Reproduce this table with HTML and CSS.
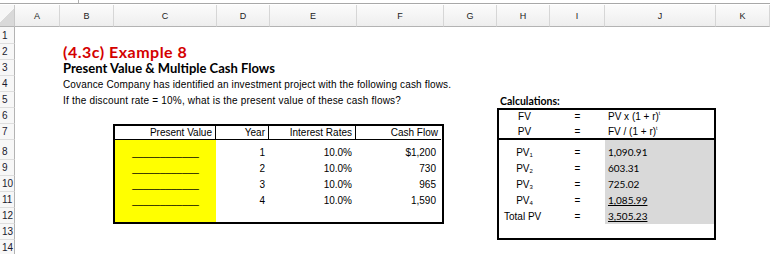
FILE: index.html
```html
<!DOCTYPE html>
<html>
<head>
<meta charset="utf-8">
<link rel="stylesheet" href="styles.css">
</head>
<body>
<div class="topbar"><span class="topdiv"></span></div>
<div class="sheet">
  <div class="corner"></div>
  <div class="colhead">A</div>
  <div class="colhead">B</div>
  <div class="colhead">C</div>
  <div class="colhead">D</div>
  <div class="colhead">E</div>
  <div class="colhead">F</div>
  <div class="colhead">G</div>
  <div class="colhead">H</div>
  <div class="colhead">I</div>
  <div class="colhead">J</div>
  <div class="colhead">K</div>

  <div class="rowhead r1">1</div>
  <div class="rowhead r2">2</div>
  <div class="rowhead r3">3</div>
  <div class="rowhead r4">4</div>
  <div class="rowhead r5">5</div>
  <div class="rowhead r6">6</div>
  <div class="rowhead r7">7</div>
  <div class="rowhead r8">8</div>
  <div class="rowhead r9">9</div>
  <div class="rowhead r10">10</div>
  <div class="rowhead r11">11</div>
  <div class="rowhead r12">12</div>
  <div class="rowhead r13">13</div>
  <div class="rowhead r14">14</div>

  <div class="title">(4.3c) Example 8</div>
  <div class="subtitle">Present Value &amp; Multiple Cash Flows</div>
  <div class="line4">Covance Company has identified an investment project with the following cash flows.</div>
  <div class="line5">If the discount rate = 10%, what is the present value of these cash flows?</div>
  <div class="calc-label">Calculations:</div>

  <div class="cf-table">
    <div class="th th-div">Present Value</div>
    <div class="th th-div">Year</div>
    <div class="th th-div">Interest Rates</div>
    <div class="th">Cash Flow</div>

    <div class="td yellow blank">____________</div>
    <div class="td num">1</div>
    <div class="td num">10.0%</div>
    <div class="td num cash">$1,200</div>

    <div class="td yellow blank">____________</div>
    <div class="td num">2</div>
    <div class="td num">10.0%</div>
    <div class="td num cash">730</div>

    <div class="td yellow blank">____________</div>
    <div class="td num">3</div>
    <div class="td num">10.0%</div>
    <div class="td num cash">965</div>

    <div class="td yellow blank">____________</div>
    <div class="td num">4</div>
    <div class="td num">10.0%</div>
    <div class="td num cash">1,590</div>

    <div class="td yellow"></div>
    <div class="td"></div>
    <div class="td"></div>
    <div class="td"></div>
  </div>

  <div class="calc-box">
    <div class="cc ctr">FV</div>
    <div class="cc ctr">=</div>
    <div class="cc left"><span>PV x (1 + r)<sup>t</sup></span></div>

    <div class="cc ctr sep">PV</div>
    <div class="cc ctr sep">=</div>
    <div class="cc left sep"><span>FV / (1 + r)<sup>t</sup></span></div>

    <div class="cc ctr"><span>PV<sub>1</sub></span></div>
    <div class="cc ctr">=</div>
    <div class="cc val">1,090.91</div>

    <div class="cc ctr"><span>PV<sub>2</sub></span></div>
    <div class="cc ctr">=</div>
    <div class="cc val">603.31</div>

    <div class="cc ctr"><span>PV<sub>3</sub></span></div>
    <div class="cc ctr">=</div>
    <div class="cc val">725.02</div>

    <div class="cc ctr"><span>PV<sub>4</sub></span></div>
    <div class="cc ctr">=</div>
    <div class="cc val"><span class="ul">1,085.99</span></div>

    <div class="cc total">Total PV</div>
    <div class="cc ctr">=</div>
    <div class="cc val"><span class="ul">3,505.23</span></div>

    <div class="cc"></div>
    <div class="cc"></div>
    <div class="cc"></div>
  </div>
</div>
</body>
</html>
```

FILE: styles.css
```css
html, body {
  margin: 0;
  padding: 0;
  background: #ffffff;
}

body {
  width: 770px;
  height: 254px;
  overflow: hidden;
  font-family: "Liberation Sans", Arial, sans-serif;
  font-size: 10px;
  color: #000;
}

.topbar {
  height: 3px;
  border-bottom: 1px solid #a8a8a8;
  margin-bottom: 1px;
  position: relative;
}

.topdiv {
  position: absolute;
  left: 78px;
  top: 0;
  width: 1px;
  height: 3px;
  background: #b0b0b0;
}

.sheet {
  display: grid;
  grid-template-columns: 15px 45px 54px 103px 53px 87px 87px 53px 53px 55px 111px 54px;
  grid-template-rows: 22px 17px 16px 16px 16px 16px 16px 16px 20px 16px 16px 16px 16px 16px 16px;
}

.corner {
  grid-column: 1;
  grid-row: 1;
  background: linear-gradient(135deg, #f7f7f7 50%, #d9d9d9 50%);
  border-bottom: 1px solid #b3b3b3;
  border-right: 1px solid #c8c8c8;
}

.colhead {
  grid-row: 1;
  display: flex;
  align-items: center;
  justify-content: center;
  background: linear-gradient(#fbfbfb, #eeeeee);
  border-bottom: 1px solid #b3b3b3;
  border-right: 1px solid #d6d6d6;
  font-size: 9px;
  color: #222;
  padding-top: 1px;
  box-sizing: border-box;
}

.rowhead {
  grid-column: 1;
  display: flex;
  align-items: flex-end;
  padding: 0 0 2px 2px;
  box-sizing: border-box;
  background: #f7f7f7;
  border-bottom: 1px solid #dedede;
  border-right: 1px solid #b3b3b3;
  font-size: 10px;
  color: #1a1a2e;
}

.r1 { grid-row: 2; }
.r2 { grid-row: 3; }
.r3 { grid-row: 4; }
.r4 { grid-row: 5; }
.r5 { grid-row: 6; }
.r6 { grid-row: 7; }
.r7 { grid-row: 8; }
.r8 { grid-row: 9; }
.r9 { grid-row: 10; }
.r10 { grid-row: 11; }
.r11 { grid-row: 12; }
.r12 { grid-row: 13; }
.r13 { grid-row: 14; }
.r14 { grid-row: 15; }

.title, .subtitle, .line4, .line5 {
  grid-column: 3 / 12;
  display: flex;
  align-items: flex-end;
  padding-left: 3px;
  white-space: nowrap;
}

.title {
  grid-row: 3;
  font-family: Lato, "Open Sans", sans-serif;
  font-weight: 700;
  font-size: 16px;
  letter-spacing: 0.5px;
  color: #d40000;
  line-height: 16px;
  padding-bottom: 0;
}

.subtitle {
  grid-row: 4;
  font-family: Lato, "Open Sans", sans-serif;
  font-weight: 700;
  font-size: 13px;
  line-height: 14px;
  padding-bottom: 1px;
}

.line4 {
  grid-row: 5;
  font-size: 10px;
  letter-spacing: 0.15px;
  padding-bottom: 2px;
}

.line5 {
  grid-row: 6;
  font-size: 10px;
  letter-spacing: 0.2px;
  padding-bottom: 2px;
}

.calc-label {
  grid-column: 9 / 12;
  grid-row: 6;
  display: flex;
  align-items: flex-end;
  padding: 0 0 1px 3px;
  font-family: Lato, "Open Sans", sans-serif;
  font-weight: 700;
  font-size: 10.5px;
}

/* Cash flow table */
.cf-table {
  grid-column: 4 / 8;
  grid-row: 8 / 14;
  display: grid;
  grid-template-columns: 101px 53px 87px 85px;
  grid-template-rows: 14px 20px 16px 16px 16px 14px;
  border: 2px solid #000;
  margin-left: -1px;
}

.th {
  display: flex;
  align-items: flex-end;
  justify-content: flex-end;
  padding: 0 3px 1px 0;
  border-bottom: 1px solid #000;
  box-sizing: border-box;
  white-space: nowrap;
}

.th-div {
  border-right: 1px solid #000;
}

.td {
  display: flex;
  align-items: flex-end;
  justify-content: flex-end;
  padding: 0 4px 2px 0;
  box-sizing: border-box;
  white-space: nowrap;
}

.yellow {
  background: #ffff00;
}

.blank {
  justify-content: center;
  padding-right: 0;
}

.cash {
  padding-right: 5px;
}

/* Calculations box */
.calc-box {
  grid-column: 9 / 12;
  grid-row: 7 / 15;
  display: grid;
  grid-template-columns: 51px 55px 109px;
  grid-template-rows: 14px 16px 20px 16px 16px 16px 16px 14px;
  border: 2px solid #000;
}

.cc {
  display: flex;
  align-items: flex-end;
  padding-bottom: 2px;
  box-sizing: border-box;
  white-space: nowrap;
}

.ctr {
  justify-content: center;
}

.left {
  padding-left: 3px;
}

.sep {
  border-bottom: 2px solid #000;
  padding-bottom: 1px;
}

.val {
  padding-left: 3px;
  background: #d9d9d9;
  font-family: Lato, "Open Sans", sans-serif;
  font-size: 10px;
}

.total {
  padding-left: 5px;
}

.ul {
  text-decoration: underline;
  text-underline-offset: 1px;
}

sup {
  font-size: 5px;
  vertical-align: 5px;
  line-height: 0;
}

sub {
  font-size: 6px;
  vertical-align: -1px;
  line-height: 0;
}
```
